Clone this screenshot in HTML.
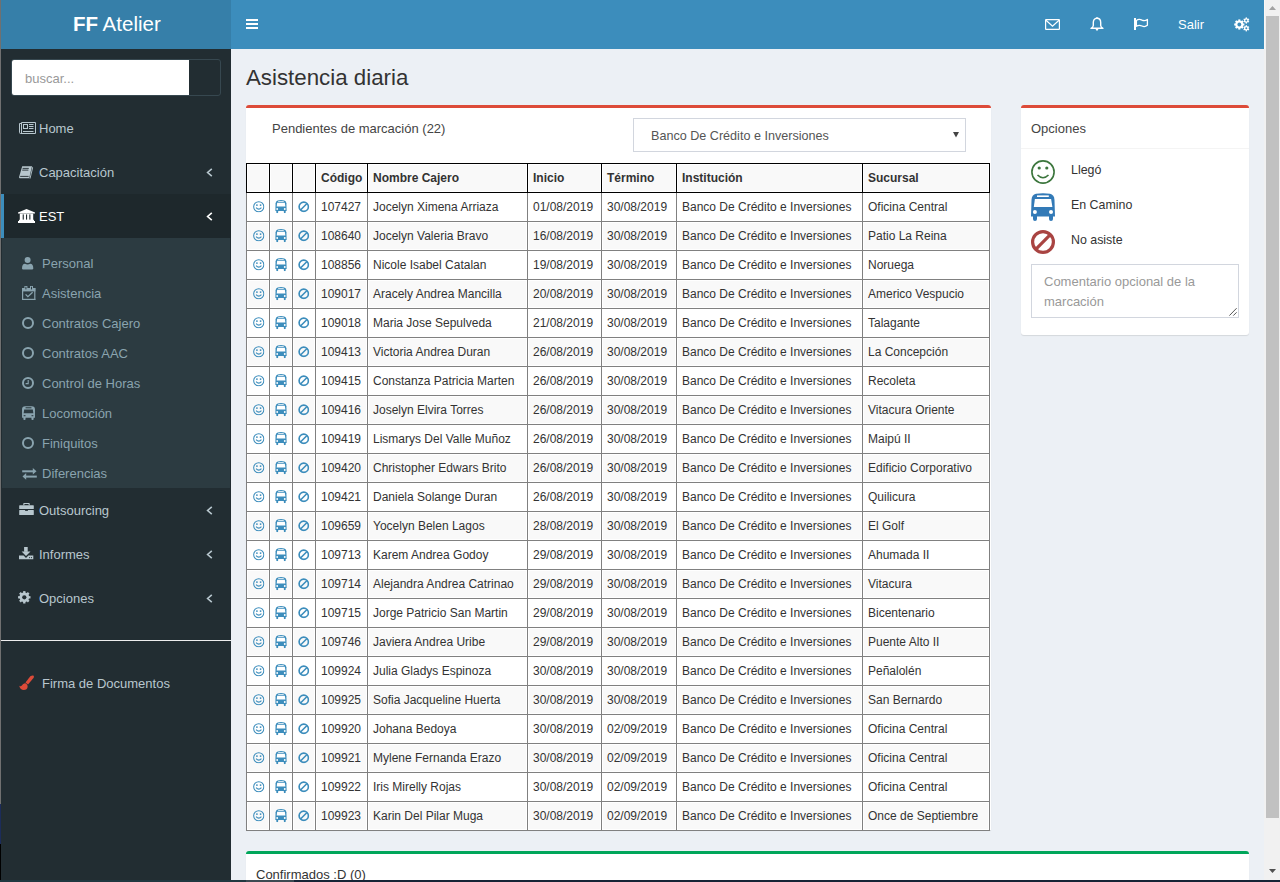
<!DOCTYPE html>
<html><head><meta charset="utf-8">
<style>
*{box-sizing:border-box}
html,body{margin:0;padding:0}
body{width:1280px;height:882px;overflow:hidden;position:relative;background:#ecf0f5;font-family:"Liberation Sans",sans-serif;color:#333}
.abs{position:absolute}
#edge{left:0;top:0;width:1px;height:882px;background:#707070}
#edge2{left:0;top:844px;width:1px;height:38px;background:#000}
#edge3{left:0;top:804px;width:1px;height:40px;background:#1c2c5a}
#logo{left:1px;top:0;width:230px;height:49px;background:#367fa9;color:#fff}
#nav{left:231px;top:0;width:1033px;height:49px;background:#3c8dbc}
#side{left:1px;top:49px;width:230px;height:831px;background:#222d32}
#sbar{left:1264px;top:0;width:16px;height:880px;background:#f1f1f1}
#sbarl{left:1264px;top:0;width:1px;height:49px;background:#fbf8f6}
#thumb{left:1266px;top:16px;width:13px;height:802px;background:#c1c1c1}
#bottom{left:231px;top:880px;width:1049px;height:2px;background:#172436}
#bottoml{left:0;top:880px;width:246px;height:2px;background:#203840}
#bottomm{left:246px;top:880px;width:48px;height:2px;background:#3c4a52}
.t{position:absolute;white-space:nowrap;line-height:20px}
.sm{font-size:13px;color:#b8c7ce}
.tv{font-size:13px;color:#8aa4af}
svg{position:absolute;overflow:visible}
#tbl{position:absolute;left:246px;top:163px;border-collapse:separate;border-spacing:0;table-layout:fixed;font-size:12px;color:#333}
#tbl td,#tbl th{padding:0 0 0 5px;height:29px;border-right:1px solid #808080;border-bottom:1px solid #808080;box-shadow:inset 0 0 0 1px #fff;white-space:nowrap;overflow:hidden;text-align:left;vertical-align:middle;line-height:20px}
#tbl tr.s td,#tbl tr.s th{background:#f9f9f9}
#tbl td:first-child{border-left:1px solid #808080}
#tbl th{border-color:#000;font-weight:bold;height:30px;border-top:1px solid #000}
#tbl th:first-child{border-left:1px solid #000}
#tbl td.i{padding:0;position:relative}

</style></head><body>
<div class="abs" id="logo"></div>
<div class="abs" id="nav"></div>
<div class="abs" id="side"></div>


<svg width="0" height="0" style="position:absolute">
<defs>
<symbol id="smile" viewBox="0 0 12 12"><circle cx="6" cy="6" r="5.3" fill="none" stroke="#3c8dbc" stroke-width="1.1"/><circle cx="4.1" cy="4.3" r="0.95" fill="#3c8dbc"/><circle cx="7.9" cy="4.3" r="0.95" fill="#3c8dbc"/><path d="M3.2 6.9 Q6 10 8.8 6.9" fill="none" stroke="#3c8dbc" stroke-width="1.2"/></symbol>
<symbol id="bus" viewBox="0 0 24 28"><path d="M0 23.6 L0.5 7 Q0.8 1.6 5 0.8 Q12 -0.3 19 0.8 Q23.2 1.6 23.5 7 L24 23.6 Z" fill="#3c8dbc"/><path d="M2 23 L6 23 L6 26 Q6 28 4 28 Q2 28 2 26 Z M18 23 L22 23 L22 26 Q22 28 20 28 Q18 28 18 26 Z" fill="#3c8dbc"/><rect x="6" y="2.4" width="11.8" height="1.6" fill="#fff"/><path d="M3.9 5.9 L20.1 5.9 L21.4 14 L2.8 14 Z" fill="#fff"/><circle cx="3.9" cy="19" r="2" fill="#fff"/><circle cx="20" cy="19" r="2" fill="#fff"/></symbol>
<symbol id="ban" viewBox="0 0 12 12"><circle cx="6" cy="6" r="4.85" fill="none" stroke="#3c8dbc" stroke-width="1.7"/><path d="M9.4 2.6 L2.6 9.4" stroke="#3c8dbc" stroke-width="1.7"/></symbol>
<symbol id="bus2" viewBox="0 0 24 28"><path d="M0 23.6 L0.5 7 Q0.8 1.6 5 0.8 Q12 -0.3 19 0.8 Q23.2 1.6 23.5 7 L24 23.6 Z" fill="#337ab7"/><path d="M2 23 L6 23 L6 26 Q6 28 4 28 Q2 28 2 26 Z M18 23 L22 23 L22 26 Q22 28 20 28 Q18 28 18 26 Z" fill="#337ab7"/><rect x="6" y="2.4" width="11.8" height="1.6" fill="#fff"/><path d="M3.9 5.9 L20.1 5.9 L21.4 14 L2.8 14 Z" fill="#fff"/><circle cx="3.9" cy="19" r="2" fill="#fff"/><circle cx="20" cy="19" r="2" fill="#fff"/></symbol></defs></svg>

<!-- content -->
<div class="t" style="left:246px;top:66px;font-size:22.3px;line-height:24px;color:#333">Asistencia diaria</div>
<div class="abs" style="left:246px;top:105px;width:745px;height:725px;background:#fff;border-top:3px solid #dd4b39;border-radius:3px 3px 0 0;box-shadow:0 1px 1px rgba(0,0,0,0.1)"></div>
<div class="t" style="left:272px;top:119px;font-size:13px;color:#444">Pendientes de marcación (22)</div>
<div class="abs" style="left:633px;top:118px;width:333px;height:34px;border:1px solid #d2d6de;background:#fff"></div>
<div class="t" style="left:651px;top:126px;font-size:12.6px;color:#555">Banco De Crédito e Inversiones</div>
<svg style="left:953px;top:132px" width="6" height="6" viewBox="0 0 6 6"><path d="M0 0 L6 0 L3 5.5 Z" fill="#444"/></svg>
<table id="tbl"><colgroup><col style="width:24px"><col style="width:23px"><col style="width:23px"><col style="width:52px"><col style="width:160px"><col style="width:74px"><col style="width:75px"><col style="width:186px"><col style="width:127px"></colgroup><tr class="s"><th></th><th></th><th></th><th>Código</th><th>Nombre Cajero</th><th>Inicio</th><th>Término</th><th>Institución</th><th>Sucursal</th></tr>
<tr><td class="i"><svg style="left:5.6px;top:7.6px" width="11.5" height="11.5"><use href="#smile"/></svg></td><td class="i"><svg style="left:5px;top:6.9px" width="12" height="13.2"><use href="#bus"/></svg></td><td class="i"><svg style="left:5.4px;top:7.7px" width="11.5" height="11.5"><use href="#ban"/></svg></td><td>107427</td><td>Jocelyn Ximena Arriaza</td><td>01/08/2019</td><td>30/08/2019</td><td>Banco De Crédito e Inversiones</td><td>Oficina Central</td></tr>
<tr class="s"><td class="i"><svg style="left:5.6px;top:7.6px" width="11.5" height="11.5"><use href="#smile"/></svg></td><td class="i"><svg style="left:5px;top:6.9px" width="12" height="13.2"><use href="#bus"/></svg></td><td class="i"><svg style="left:5.4px;top:7.7px" width="11.5" height="11.5"><use href="#ban"/></svg></td><td>108640</td><td>Jocelyn Valeria Bravo</td><td>16/08/2019</td><td>30/08/2019</td><td>Banco De Crédito e Inversiones</td><td>Patio La Reina</td></tr>
<tr><td class="i"><svg style="left:5.6px;top:7.6px" width="11.5" height="11.5"><use href="#smile"/></svg></td><td class="i"><svg style="left:5px;top:6.9px" width="12" height="13.2"><use href="#bus"/></svg></td><td class="i"><svg style="left:5.4px;top:7.7px" width="11.5" height="11.5"><use href="#ban"/></svg></td><td>108856</td><td>Nicole Isabel Catalan</td><td>19/08/2019</td><td>30/08/2019</td><td>Banco De Crédito e Inversiones</td><td>Noruega</td></tr>
<tr class="s"><td class="i"><svg style="left:5.6px;top:7.6px" width="11.5" height="11.5"><use href="#smile"/></svg></td><td class="i"><svg style="left:5px;top:6.9px" width="12" height="13.2"><use href="#bus"/></svg></td><td class="i"><svg style="left:5.4px;top:7.7px" width="11.5" height="11.5"><use href="#ban"/></svg></td><td>109017</td><td>Aracely Andrea Mancilla</td><td>20/08/2019</td><td>30/08/2019</td><td>Banco De Crédito e Inversiones</td><td>Americo Vespucio</td></tr>
<tr><td class="i"><svg style="left:5.6px;top:7.6px" width="11.5" height="11.5"><use href="#smile"/></svg></td><td class="i"><svg style="left:5px;top:6.9px" width="12" height="13.2"><use href="#bus"/></svg></td><td class="i"><svg style="left:5.4px;top:7.7px" width="11.5" height="11.5"><use href="#ban"/></svg></td><td>109018</td><td>Maria Jose Sepulveda</td><td>21/08/2019</td><td>30/08/2019</td><td>Banco De Crédito e Inversiones</td><td>Talagante</td></tr>
<tr class="s"><td class="i"><svg style="left:5.6px;top:7.6px" width="11.5" height="11.5"><use href="#smile"/></svg></td><td class="i"><svg style="left:5px;top:6.9px" width="12" height="13.2"><use href="#bus"/></svg></td><td class="i"><svg style="left:5.4px;top:7.7px" width="11.5" height="11.5"><use href="#ban"/></svg></td><td>109413</td><td>Victoria Andrea Duran</td><td>26/08/2019</td><td>30/08/2019</td><td>Banco De Crédito e Inversiones</td><td>La Concepción</td></tr>
<tr><td class="i"><svg style="left:5.6px;top:7.6px" width="11.5" height="11.5"><use href="#smile"/></svg></td><td class="i"><svg style="left:5px;top:6.9px" width="12" height="13.2"><use href="#bus"/></svg></td><td class="i"><svg style="left:5.4px;top:7.7px" width="11.5" height="11.5"><use href="#ban"/></svg></td><td>109415</td><td>Constanza Patricia Marten</td><td>26/08/2019</td><td>30/08/2019</td><td>Banco De Crédito e Inversiones</td><td>Recoleta</td></tr>
<tr class="s"><td class="i"><svg style="left:5.6px;top:7.6px" width="11.5" height="11.5"><use href="#smile"/></svg></td><td class="i"><svg style="left:5px;top:6.9px" width="12" height="13.2"><use href="#bus"/></svg></td><td class="i"><svg style="left:5.4px;top:7.7px" width="11.5" height="11.5"><use href="#ban"/></svg></td><td>109416</td><td>Joselyn Elvira Torres</td><td>26/08/2019</td><td>30/08/2019</td><td>Banco De Crédito e Inversiones</td><td>Vitacura Oriente</td></tr>
<tr><td class="i"><svg style="left:5.6px;top:7.6px" width="11.5" height="11.5"><use href="#smile"/></svg></td><td class="i"><svg style="left:5px;top:6.9px" width="12" height="13.2"><use href="#bus"/></svg></td><td class="i"><svg style="left:5.4px;top:7.7px" width="11.5" height="11.5"><use href="#ban"/></svg></td><td>109419</td><td>Lismarys Del Valle Muñoz</td><td>26/08/2019</td><td>30/08/2019</td><td>Banco De Crédito e Inversiones</td><td>Maipú II</td></tr>
<tr class="s"><td class="i"><svg style="left:5.6px;top:7.6px" width="11.5" height="11.5"><use href="#smile"/></svg></td><td class="i"><svg style="left:5px;top:6.9px" width="12" height="13.2"><use href="#bus"/></svg></td><td class="i"><svg style="left:5.4px;top:7.7px" width="11.5" height="11.5"><use href="#ban"/></svg></td><td>109420</td><td>Christopher Edwars Brito</td><td>26/08/2019</td><td>30/08/2019</td><td>Banco De Crédito e Inversiones</td><td>Edificio Corporativo</td></tr>
<tr><td class="i"><svg style="left:5.6px;top:7.6px" width="11.5" height="11.5"><use href="#smile"/></svg></td><td class="i"><svg style="left:5px;top:6.9px" width="12" height="13.2"><use href="#bus"/></svg></td><td class="i"><svg style="left:5.4px;top:7.7px" width="11.5" height="11.5"><use href="#ban"/></svg></td><td>109421</td><td>Daniela Solange Duran</td><td>26/08/2019</td><td>30/08/2019</td><td>Banco De Crédito e Inversiones</td><td>Quilicura</td></tr>
<tr class="s"><td class="i"><svg style="left:5.6px;top:7.6px" width="11.5" height="11.5"><use href="#smile"/></svg></td><td class="i"><svg style="left:5px;top:6.9px" width="12" height="13.2"><use href="#bus"/></svg></td><td class="i"><svg style="left:5.4px;top:7.7px" width="11.5" height="11.5"><use href="#ban"/></svg></td><td>109659</td><td>Yocelyn Belen Lagos</td><td>28/08/2019</td><td>30/08/2019</td><td>Banco De Crédito e Inversiones</td><td>El Golf</td></tr>
<tr><td class="i"><svg style="left:5.6px;top:7.6px" width="11.5" height="11.5"><use href="#smile"/></svg></td><td class="i"><svg style="left:5px;top:6.9px" width="12" height="13.2"><use href="#bus"/></svg></td><td class="i"><svg style="left:5.4px;top:7.7px" width="11.5" height="11.5"><use href="#ban"/></svg></td><td>109713</td><td>Karem Andrea Godoy</td><td>29/08/2019</td><td>30/08/2019</td><td>Banco De Crédito e Inversiones</td><td>Ahumada II</td></tr>
<tr class="s"><td class="i"><svg style="left:5.6px;top:7.6px" width="11.5" height="11.5"><use href="#smile"/></svg></td><td class="i"><svg style="left:5px;top:6.9px" width="12" height="13.2"><use href="#bus"/></svg></td><td class="i"><svg style="left:5.4px;top:7.7px" width="11.5" height="11.5"><use href="#ban"/></svg></td><td>109714</td><td>Alejandra Andrea Catrinao</td><td>29/08/2019</td><td>30/08/2019</td><td>Banco De Crédito e Inversiones</td><td>Vitacura</td></tr>
<tr><td class="i"><svg style="left:5.6px;top:7.6px" width="11.5" height="11.5"><use href="#smile"/></svg></td><td class="i"><svg style="left:5px;top:6.9px" width="12" height="13.2"><use href="#bus"/></svg></td><td class="i"><svg style="left:5.4px;top:7.7px" width="11.5" height="11.5"><use href="#ban"/></svg></td><td>109715</td><td>Jorge Patricio San Martin</td><td>29/08/2019</td><td>30/08/2019</td><td>Banco De Crédito e Inversiones</td><td>Bicentenario</td></tr>
<tr class="s"><td class="i"><svg style="left:5.6px;top:7.6px" width="11.5" height="11.5"><use href="#smile"/></svg></td><td class="i"><svg style="left:5px;top:6.9px" width="12" height="13.2"><use href="#bus"/></svg></td><td class="i"><svg style="left:5.4px;top:7.7px" width="11.5" height="11.5"><use href="#ban"/></svg></td><td>109746</td><td>Javiera Andrea Uribe</td><td>29/08/2019</td><td>30/08/2019</td><td>Banco De Crédito e Inversiones</td><td>Puente Alto II</td></tr>
<tr><td class="i"><svg style="left:5.6px;top:7.6px" width="11.5" height="11.5"><use href="#smile"/></svg></td><td class="i"><svg style="left:5px;top:6.9px" width="12" height="13.2"><use href="#bus"/></svg></td><td class="i"><svg style="left:5.4px;top:7.7px" width="11.5" height="11.5"><use href="#ban"/></svg></td><td>109924</td><td>Julia Gladys Espinoza</td><td>30/08/2019</td><td>30/08/2019</td><td>Banco De Crédito e Inversiones</td><td>Peñalolén</td></tr>
<tr class="s"><td class="i"><svg style="left:5.6px;top:7.6px" width="11.5" height="11.5"><use href="#smile"/></svg></td><td class="i"><svg style="left:5px;top:6.9px" width="12" height="13.2"><use href="#bus"/></svg></td><td class="i"><svg style="left:5.4px;top:7.7px" width="11.5" height="11.5"><use href="#ban"/></svg></td><td>109925</td><td>Sofia Jacqueline Huerta</td><td>30/08/2019</td><td>30/08/2019</td><td>Banco De Crédito e Inversiones</td><td>San Bernardo</td></tr>
<tr><td class="i"><svg style="left:5.6px;top:7.6px" width="11.5" height="11.5"><use href="#smile"/></svg></td><td class="i"><svg style="left:5px;top:6.9px" width="12" height="13.2"><use href="#bus"/></svg></td><td class="i"><svg style="left:5.4px;top:7.7px" width="11.5" height="11.5"><use href="#ban"/></svg></td><td>109920</td><td>Johana Bedoya</td><td>30/08/2019</td><td>02/09/2019</td><td>Banco De Crédito e Inversiones</td><td>Oficina Central</td></tr>
<tr class="s"><td class="i"><svg style="left:5.6px;top:7.6px" width="11.5" height="11.5"><use href="#smile"/></svg></td><td class="i"><svg style="left:5px;top:6.9px" width="12" height="13.2"><use href="#bus"/></svg></td><td class="i"><svg style="left:5.4px;top:7.7px" width="11.5" height="11.5"><use href="#ban"/></svg></td><td>109921</td><td>Mylene Fernanda Erazo</td><td>30/08/2019</td><td>02/09/2019</td><td>Banco De Crédito e Inversiones</td><td>Oficina Central</td></tr>
<tr><td class="i"><svg style="left:5.6px;top:7.6px" width="11.5" height="11.5"><use href="#smile"/></svg></td><td class="i"><svg style="left:5px;top:6.9px" width="12" height="13.2"><use href="#bus"/></svg></td><td class="i"><svg style="left:5.4px;top:7.7px" width="11.5" height="11.5"><use href="#ban"/></svg></td><td>109922</td><td>Iris Mirelly Rojas</td><td>30/08/2019</td><td>02/09/2019</td><td>Banco De Crédito e Inversiones</td><td>Oficina Central</td></tr>
<tr class="s"><td class="i"><svg style="left:5.6px;top:7.6px" width="11.5" height="11.5"><use href="#smile"/></svg></td><td class="i"><svg style="left:5px;top:6.9px" width="12" height="13.2"><use href="#bus"/></svg></td><td class="i"><svg style="left:5.4px;top:7.7px" width="11.5" height="11.5"><use href="#ban"/></svg></td><td>109923</td><td>Karin Del Pilar Muga</td><td>30/08/2019</td><td>02/09/2019</td><td>Banco De Crédito e Inversiones</td><td>Once de Septiembre</td></tr>
</table>
<!-- options box -->
<div class="abs" style="left:1021px;top:105px;width:228px;height:230px;background:#fff;border-top:3px solid #dd4b39;border-radius:3px;box-shadow:0 1px 1px rgba(0,0,0,0.1)"></div>
<div class="abs" style="left:1021px;top:148px;width:228px;height:1px;background:#f4f4f4"></div>
<div class="t" style="left:1031px;top:119px;font-size:13px;color:#444">Opciones</div>
<svg style="left:1031px;top:160px" width="24" height="24" viewBox="0 0 24 24"><circle cx="12" cy="12" r="11.1" fill="none" stroke="#3c763d" stroke-width="1.6"/><circle cx="8.2" cy="8" r="1.6" fill="#3c763d"/><circle cx="15.8" cy="8" r="1.6" fill="#3c763d"/><path d="M6.5 15 Q12 20.5 17.5 15" fill="none" stroke="#3c763d" stroke-width="1.6"/></svg>
<svg style="left:1031px;top:193px" width="24" height="28"><use href="#bus2"/></svg>
<svg style="left:1031px;top:230px" width="24" height="24" viewBox="0 0 24 24"><circle cx="12" cy="12" r="10.4" fill="none" stroke="#a94442" stroke-width="3.2"/><path d="M19.3 4.7 L4.7 19.3" stroke="#a94442" stroke-width="3.2"/></svg>
<div class="t" style="left:1071px;top:160px;font-size:12.4px;color:#333">Llegó</div>
<div class="t" style="left:1071px;top:195px;font-size:12.4px;color:#333">En Camino</div>
<div class="t" style="left:1071px;top:230px;font-size:12.4px;color:#333">No asiste</div>
<div class="abs" style="left:1031px;top:264px;width:208px;height:54px;border:1px solid #d2d6de;background:#fff"></div>
<div class="t" style="left:1044px;top:272px;font-size:13px;color:#999">Comentario opcional de la</div>
<div class="t" style="left:1044px;top:292px;font-size:13px;color:#999">marcación</div>
<svg style="left:1226px;top:305px" width="11" height="11" viewBox="0 0 11 11"><path d="M10.6 3.2 L3.4 10.6 M10.6 7.3 L7.3 10.6" stroke="#555" stroke-width="1"/></svg>

<!-- green box -->
<div class="abs" style="left:246px;top:851px;width:1003px;height:40px;background:#fff;border-top:3px solid #00a65a;border-radius:3px;box-shadow:0 1px 1px rgba(0,0,0,0.1)"></div>
<div class="t" style="left:256px;top:865px;font-size:13px;color:#333">Confirmados :D (0)</div>
<!-- logo text -->
<div class="t" style="left:73px;top:14px;font-size:20.5px;line-height:20px;color:#fff"><b>FF</b> Atelier</div>


<!-- navbar -->
<div class="abs" style="left:246px;top:19px;width:12px;height:2px;background:#fff"></div>
<div class="abs" style="left:246px;top:23px;width:12px;height:2px;background:#fff"></div>
<div class="abs" style="left:246px;top:27px;width:12px;height:2px;background:#fff"></div>
<!-- envelope -->
<svg style="left:1045px;top:19px" width="15" height="11" viewBox="0 0 15 11"><rect x="0.6" y="0.6" width="13.8" height="9.8" rx="0.5" fill="none" stroke="#fff" stroke-width="1.2"/><path d="M1 1.3 L7.5 7.3 L14 1.3" fill="none" stroke="#fff" stroke-width="1.2"/></svg>
<!-- bell -->
<svg style="left:1090px;top:17px" width="14" height="14" viewBox="0 0 14 14"><path d="M7 1.2 C4.2 1.2 3.3 3.4 3.3 5.6 L3.3 8.4 C3.3 9.6 2.2 10.6 1 11.3 L13 11.3 C11.8 10.6 10.7 9.6 10.7 8.4 L10.7 5.6 C10.7 3.4 9.8 1.2 7 1.2 Z" fill="none" stroke="#fff" stroke-width="1.4" stroke-linejoin="round"/><path d="M5.6 12 L8.4 12 L7.8 13.6 L6.2 13.6 Z" fill="#fff"/><rect x="6.4" y="0" width="1.2" height="1.6" fill="#fff"/></svg>
<!-- flag -->
<svg style="left:1133px;top:18px" width="16" height="12" viewBox="0 0 16 12"><rect x="1" y="0" width="2" height="12" fill="#fff"/><path d="M3.4 2.4 C5.3 1 7.3 1.2 9 2.1 C10.6 2.9 12.5 2.9 14.4 1.5 L14.4 7.3 C12.5 8.8 10.6 8.8 9 8 C7.3 7.2 5.3 7.1 3.4 8.3 Z" fill="none" stroke="#fff" stroke-width="1.3" stroke-linejoin="round"/></svg>
<div class="t" style="left:1178px;top:15px;font-size:13px;color:#fff">Salir</div>
<!-- gears -->
<svg style="left:1234px;top:16.5px" width="16" height="16" viewBox="0 0 16 16"><g fill="#fff"><circle cx="5.3" cy="7.5" r="4.0"/><rect x="-1.0" y="-5.1" width="2.0" height="10.2" transform="translate(5.3 7.5) rotate(0.0)"/><rect x="-1.0" y="-5.1" width="2.0" height="10.2" transform="translate(5.3 7.5) rotate(45.0)"/><rect x="-1.0" y="-5.1" width="2.0" height="10.2" transform="translate(5.3 7.5) rotate(90.0)"/><rect x="-1.0" y="-5.1" width="2.0" height="10.2" transform="translate(5.3 7.5) rotate(135.0)"/><circle cx="12.3" cy="3.5" r="2.3"/><rect x="-0.65" y="-3.1" width="1.3" height="6.2" transform="translate(12.3 3.5) rotate(0.0)"/><rect x="-0.65" y="-3.1" width="1.3" height="6.2" transform="translate(12.3 3.5) rotate(60.0)"/><rect x="-0.65" y="-3.1" width="1.3" height="6.2" transform="translate(12.3 3.5) rotate(120.0)"/><circle cx="12.3" cy="11.3" r="2.3"/><rect x="-0.65" y="-3.1" width="1.3" height="6.2" transform="translate(12.3 11.3) rotate(0.0)"/><rect x="-0.65" y="-3.1" width="1.3" height="6.2" transform="translate(12.3 11.3) rotate(60.0)"/><rect x="-0.65" y="-3.1" width="1.3" height="6.2" transform="translate(12.3 11.3) rotate(120.0)"/></g><circle cx="5.3" cy="7.5" r="1.9" fill="#3c8dbc"/><circle cx="12.3" cy="3.5" r="1.0" fill="#3c8dbc"/><circle cx="12.3" cy="11.3" r="1.0" fill="#3c8dbc"/></svg>

<!-- sidebar search -->
<div class="abs" style="left:11px;top:59px;width:210px;height:37px;border:1px solid #374850;border-radius:3px;background:#222d32"></div>
<div class="abs" style="left:12px;top:60px;width:177px;height:35px;background:#fff;border-radius:2px 0 0 2px"></div>
<div class="t" style="left:25px;top:69px;font-size:13px;color:#999">buscar...</div>

<!-- main menu -->
<div class="t sm" style="left:39px;top:119px">Home</div>
<div class="t sm" style="left:39px;top:163px">Capacitación</div>
<div class="abs" style="left:1px;top:194px;width:230px;height:44px;background:#1e282c"></div>
<div class="abs" style="left:1px;top:194px;width:3px;height:44px;background:#3c8dbc"></div>
<div class="t sm" style="left:39px;top:207px;color:#fff">EST</div>
<div class="abs" style="left:2px;top:238px;width:228px;height:250px;background:#2c3b41"></div>
<div class="t tv" style="left:42px;top:254px">Personal</div>
<div class="t tv" style="left:42px;top:284px">Asistencia</div>
<div class="t tv" style="left:42px;top:314px">Contratos Cajero</div>
<div class="t tv" style="left:42px;top:344px">Contratos AAC</div>
<div class="t tv" style="left:42px;top:374px">Control de Horas</div>
<div class="t tv" style="left:42px;top:404px">Locomoción</div>
<div class="t tv" style="left:42px;top:434px">Finiquitos</div>
<div class="t tv" style="left:42px;top:464px">Diferencias</div>
<div class="t sm" style="left:39px;top:501px">Outsourcing</div>
<div class="t sm" style="left:39px;top:545px">Informes</div>
<div class="t sm" style="left:39px;top:589px">Opciones</div>
<div class="abs" style="left:1px;top:640px;width:230px;height:1px;background:#eee"></div>
<div class="t sm" style="left:42px;top:674px">Firma de Documentos</div>

<!-- sidebar icons -->
<svg style="left:19px;top:122px" width="17" height="12" viewBox="0 0 17 12"><g fill="none" stroke="#b8c7ce" stroke-width="1"><path d="M2.5 0.5 L16.5 0.5 L16.5 11.5 L1.5 11.5 Q0.5 11.5 0.5 10.5 L0.5 1.5 L2.5 1.5"/><path d="M2.5 0.5 L2.5 11"/><rect x="4.5" y="2.5" width="4" height="4"/><path d="M10 2.5 L14.5 2.5 M10 4.5 L14.5 4.5 M10 6.5 L14.5 6.5 M4 9.5 L14.5 9.5"/></g></svg>
<svg style="left:19px;top:166px" width="14" height="13" viewBox="0 0 14 13"><path d="M3.2 0.2 L13 0.2 L10.2 12.2 L0.6 12.2 Q-0.2 12 0.2 10.5 Z" fill="#b8c7ce"/><path d="M3.6 2.4 L9.8 2.4 M3.2 4.1 L9.4 4.1" stroke="#222d32" stroke-width="0.9"/><path d="M1.2 10.4 L9.6 10.4" stroke="#222d32" stroke-width="0.9"/><path d="M13 0.8 L13.6 1.8 L11 12.6" fill="none" stroke="#b8c7ce" stroke-width="0.9"/></svg>
<svg style="left:18px;top:209px" width="17" height="14" viewBox="0 0 17 14"><g fill="#fff"><path d="M8.5 0 L17 3.6 L17 4.6 L0 4.6 L0 3.6 Z"/><rect x="1.8" y="4.6" width="13.4" height="6.6"/><rect x="1" y="10.8" width="15" height="1.3"/><rect x="0" y="12" width="17" height="2"/></g><g fill="#1e282c"><rect x="4.7" y="5.4" width="1.1" height="5.2"/><rect x="8" y="5.4" width="1.1" height="5.2"/><rect x="11.3" y="5.4" width="1.1" height="5.2"/></g></svg>
<svg style="left:22px;top:257px" width="12" height="13" viewBox="0 0 12 13"><g fill="#8aa4af"><circle cx="5.6" cy="3" r="3"/><path d="M0 11.5 Q0 6.8 3 6.8 Q5.6 8 8.2 6.8 Q11.3 6.8 11.3 11.5 Q11.3 12.5 10 12.5 L1.2 12.5 Q0 12.5 0 11.5 Z"/></g></svg>
<svg style="left:21.6px;top:286px" width="14" height="14" viewBox="0 0 14 14"><g fill="#8aa4af"><rect x="0" y="2" width="13.4" height="3.4"/><rect x="2.4" y="0" width="3" height="3"/><rect x="8" y="0" width="3" height="3"/><rect x="0" y="2" width="1.2" height="12"/><rect x="12.2" y="2" width="1.2" height="12"/><rect x="0" y="12.8" width="13.4" height="1.2"/></g><rect x="3.4" y="0.8" width="1" height="2.6" fill="#2c3b41"/><rect x="9" y="0.8" width="1" height="2.6" fill="#2c3b41"/><path d="M3.6 8.4 L5.9 10.7 L10.6 6.3" fill="none" stroke="#8aa4af" stroke-width="1.3"/></svg>
<svg style="left:22px;top:317px" width="12" height="12" viewBox="0 0 12 12"><circle cx="6" cy="6" r="5" fill="none" stroke="#8aa4af" stroke-width="2"/></svg>
<svg style="left:22px;top:347px" width="12" height="12" viewBox="0 0 12 12"><circle cx="6" cy="6" r="5" fill="none" stroke="#8aa4af" stroke-width="2"/></svg>
<svg style="left:22px;top:377px" width="12" height="12" viewBox="0 0 12 12"><circle cx="6" cy="6" r="5" fill="none" stroke="#8aa4af" stroke-width="2"/><path d="M6.2 3 L6.2 6.6 L3.6 6.6" fill="none" stroke="#8aa4af" stroke-width="1.1"/></svg>
<svg style="left:21.5px;top:406px" width="13" height="14" viewBox="0 0 24 26"><path d="M0 6 Q0 0.5 6 0.5 L18 0.5 Q24 0.5 24 6 L24 22 L21.5 22 L21.5 24.5 Q21.5 26 20 26 L19 26 Q17.5 26 17.5 24.5 L17.5 22 L6.5 22 L6.5 24.5 Q6.5 26 5 26 L4 26 Q2.5 26 2.5 24.5 L2.5 22 L0 22 Z" fill="#8aa4af"/><rect x="6.5" y="2.3" width="11" height="2" fill="#2c3b41"/><path d="M4 6.5 L20 6.5 L21 13.5 L3 13.5 Z" fill="#2c3b41"/><rect x="3" y="17" width="3.4" height="2" fill="#2c3b41"/><rect x="17.6" y="17" width="3.4" height="2" fill="#2c3b41"/></svg>
<svg style="left:22px;top:437px" width="12" height="12" viewBox="0 0 12 12"><circle cx="6" cy="6" r="5" fill="none" stroke="#8aa4af" stroke-width="2"/></svg>
<svg style="left:21.5px;top:468px" width="15" height="12" viewBox="0 0 15 12"><g fill="#8aa4af"><rect x="0.2" y="2.3" width="11.5" height="2"/><path d="M10.8 0 L14.5 3.3 L10.8 6.6 Z"/><rect x="3.3" y="7.6" width="11.5" height="2"/><path d="M4.2 5.1 L0.5 8.6 L4.2 11.8 Z"/></g></svg>
<svg style="left:18.5px;top:503px" width="15" height="12" viewBox="0 0 15 12"><g fill="#b8c7ce"><path d="M4.3 2.2 L4.3 0.6 Q4.3 0 5 0 L10 0 Q10.7 0 10.7 0.6 L10.7 2.2 L9.6 2.2 L9.6 1.1 L5.4 1.1 L5.4 2.2 Z"/><rect x="0.2" y="2.2" width="14.6" height="3.9" rx="0.6"/><rect x="0.2" y="6.9" width="14.6" height="5.1" rx="0.6"/></g><rect x="6.1" y="6.1" width="2.8" height="1.8" fill="#222d32"/></svg>
<svg style="left:18.5px;top:547px" width="15" height="13" viewBox="0 0 15 13"><g fill="#b8c7ce"><rect x="5.1" y="0" width="3.6" height="4.8"/><path d="M2.6 4.5 L11.5 4.5 L7 9 Z"/><path d="M0 8.6 L4.6 8.6 L7 11 L9.4 8.6 L14.3 8.6 L14.3 12.3 L0 12.3 Z"/></g><circle cx="10.6" cy="10.6" r="0.55" fill="#222d32"/><circle cx="12.5" cy="10.6" r="0.55" fill="#222d32"/></svg>
<svg style="left:18.2px;top:591.3px" width="12.6" height="12.6" viewBox="0 0 13 13"><g transform="translate(6.5 6.5)" fill="#b8c7ce"><circle r="5"/><rect x="-1.2" y="-6.4" width="2.4" height="12.8"/><rect x="-1.2" y="-6.4" width="2.4" height="12.8" transform="rotate(45)"/><rect x="-1.2" y="-6.4" width="2.4" height="12.8" transform="rotate(90)"/><rect x="-1.2" y="-6.4" width="2.4" height="12.8" transform="rotate(135)"/></g><circle cx="6.5" cy="6.5" r="2.2" fill="#222d32"/></svg>
<svg style="left:19px;top:675px" width="16" height="16" viewBox="0 0 16 16"><g fill="#dd4b39"><path d="M11.3 1.3 Q12.9 0.1 14.4 0.5 Q15.3 1.3 14.7 2.8 L9 9.4 L6.5 7.6 Z"/><path d="M6.2 8.2 Q8.9 9.2 8.6 12 Q8.2 15 4.8 15 Q1.5 15 0 10.4 Q1.4 11.9 2.6 10.8 Q4.2 8 6.2 8.2 Z"/></g></svg>
<!-- chevrons -->
<svg style="left:206px;top:168px" width="7" height="9" viewBox="0 0 7 9"><path d="M5.8 0.8 L1.6 4.5 L5.8 8.2" fill="none" stroke="#b8c7ce" stroke-width="1.6"/></svg>
<svg style="left:206px;top:212px" width="7" height="9" viewBox="0 0 7 9"><path d="M5.8 0.8 L1.6 4.5 L5.8 8.2" fill="none" stroke="#fff" stroke-width="1.6"/></svg>
<svg style="left:206px;top:506px" width="7" height="9" viewBox="0 0 7 9"><path d="M5.8 0.8 L1.6 4.5 L5.8 8.2" fill="none" stroke="#b8c7ce" stroke-width="1.6"/></svg>
<svg style="left:206px;top:550px" width="7" height="9" viewBox="0 0 7 9"><path d="M5.8 0.8 L1.6 4.5 L5.8 8.2" fill="none" stroke="#b8c7ce" stroke-width="1.6"/></svg>
<svg style="left:206px;top:594px" width="7" height="9" viewBox="0 0 7 9"><path d="M5.8 0.8 L1.6 4.5 L5.8 8.2" fill="none" stroke="#b8c7ce" stroke-width="1.6"/></svg>
<div class="abs" id="edge"></div>
<div class="abs" id="edge2"></div><div class="abs" id="edge3"></div>
<div class="abs" id="sbar"></div>
<div class="abs" id="sbarl"></div>
<div class="abs" id="thumb"></div>
<div class="abs" id="bottom"></div><div class="abs" id="bottoml"></div><div class="abs" id="bottomm"></div>
<svg style="left:1269px;top:6px" width="7" height="4" viewBox="0 0 7 4"><path d="M0 4 L3.5 0 L7 4 Z" fill="#a3a3a3"/></svg>
<svg style="left:1269px;top:869px" width="7" height="4" viewBox="0 0 7 4"><path d="M0 0 L3.5 4 L7 0 Z" fill="#505050"/></svg>
</body></html>
